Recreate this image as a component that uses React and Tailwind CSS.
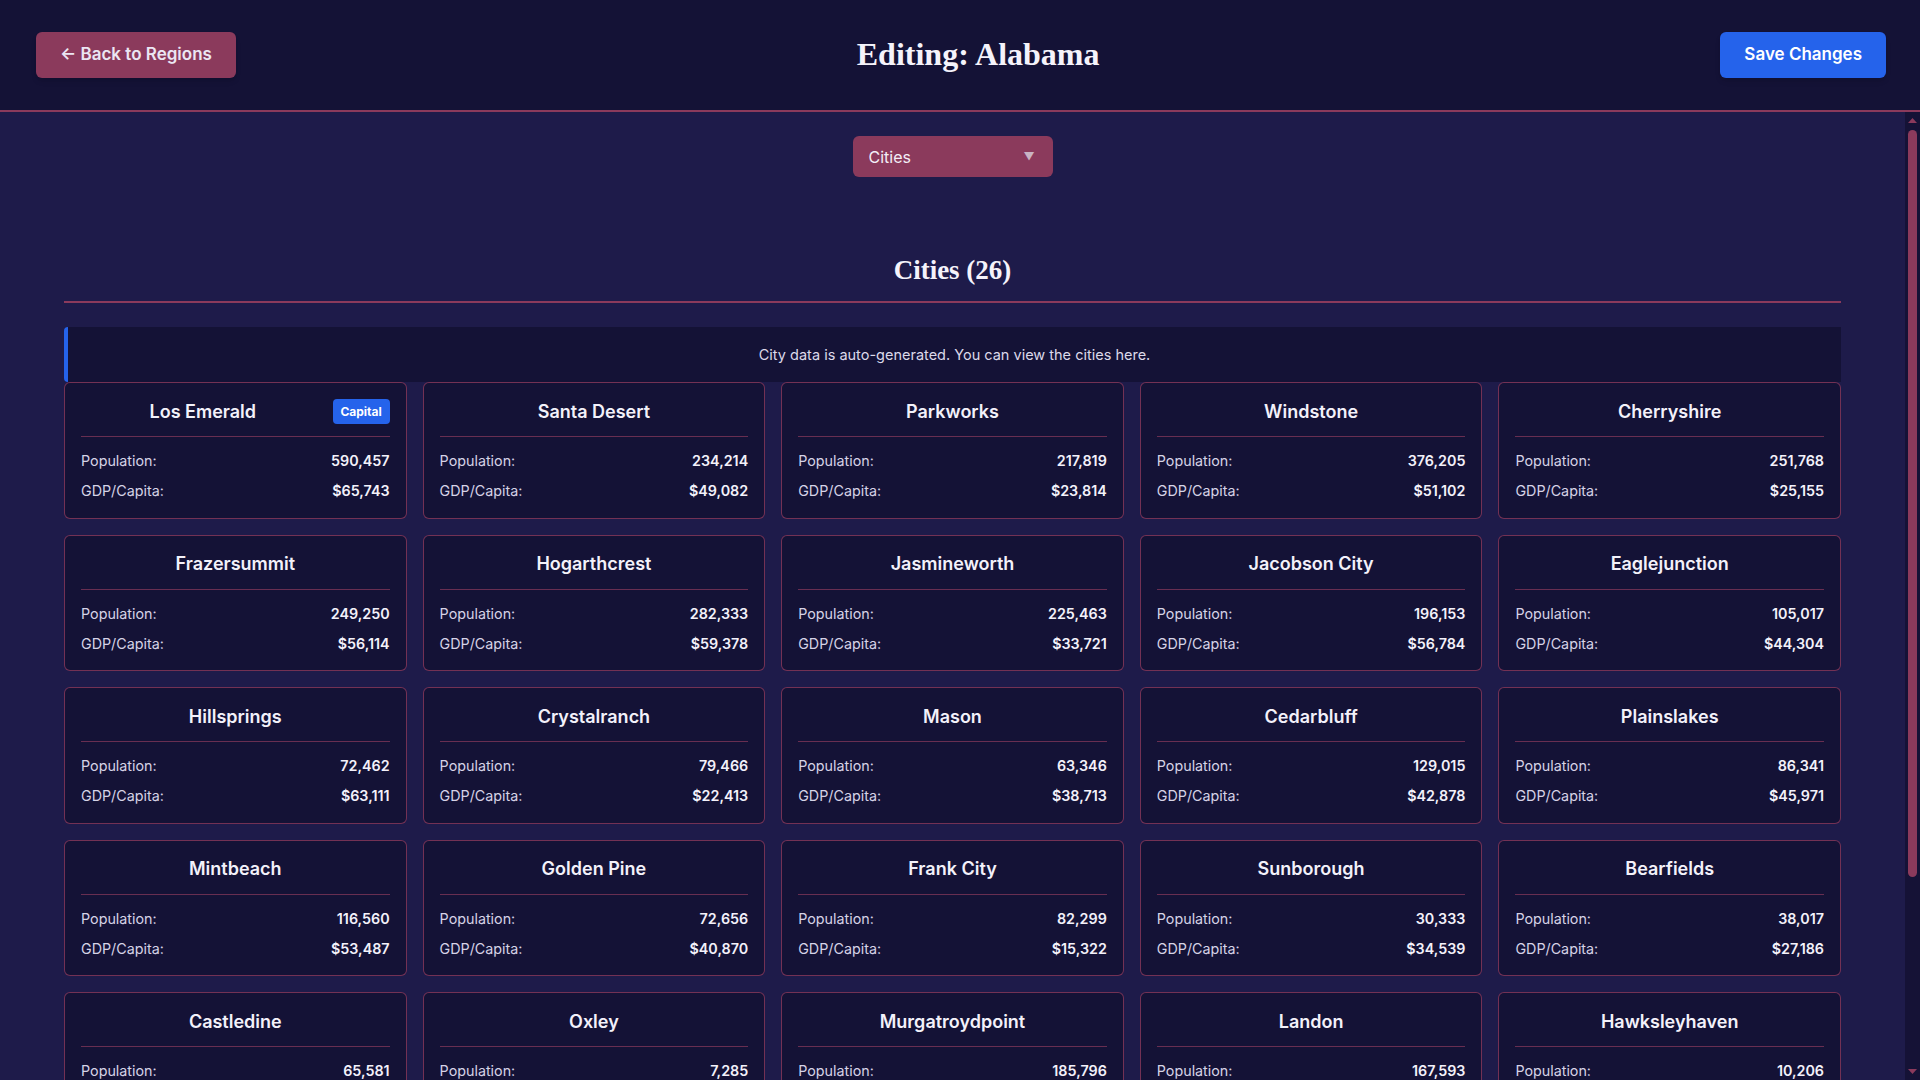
import React from "react";

const cities = [
  ["Los Emerald", "590,457", "$65,743", true],
  ["Santa Desert", "234,214", "$49,082"],
  ["Parkworks", "217,819", "$23,814"],
  ["Windstone", "376,205", "$51,102"],
  ["Cherryshire", "251,768", "$25,155"],
  ["Frazersummit", "249,250", "$56,114"],
  ["Hogarthcrest", "282,333", "$59,378"],
  ["Jasmineworth", "225,463", "$33,721"],
  ["Jacobson City", "196,153", "$56,784"],
  ["Eaglejunction", "105,017", "$44,304"],
  ["Hillsprings", "72,462", "$63,111"],
  ["Crystalranch", "79,466", "$22,413"],
  ["Mason", "63,346", "$38,713"],
  ["Cedarbluff", "129,015", "$42,878"],
  ["Plainslakes", "86,341", "$45,971"],
  ["Mintbeach", "116,560", "$53,487"],
  ["Golden Pine", "72,656", "$40,870"],
  ["Frank City", "82,299", "$15,322"],
  ["Sunborough", "30,333", "$34,539"],
  ["Bearfields", "38,017", "$27,186"],
  ["Castledine", "65,581", "$31,204"],
  ["Oxley", "7,285", "$18,650"],
  ["Murgatroydpoint", "185,796", "$47,392"],
  ["Landon", "167,593", "$52,018"],
  ["Hawksleyhaven", "10,206", "$29,447"],
  ["Riverton Falls", "54,118", "$36,902"],
];

function CityCard({ name, pop, gdp, capital }) {
  return (
    <div className="rounded-md border border-[#8b3a5c]/80 bg-[#141236] px-4 pt-4 pb-[16.5px]">
      <div className="box-content flex h-[25px] items-center gap-2 border-b border-[#8b3a5c]/70 pb-3">
        <h3 className="flex-1 text-center text-[18px] font-semibold leading-none text-[#f3f1fa]">{name}</h3>
        {capital && (
          <span className="flex h-[25px] w-[57px] items-center justify-center rounded bg-[#2563eb] text-[12px] font-bold text-white">
            Capital
          </span>
        )}
      </div>
      <div className="mt-[14px] flex flex-col gap-[10px] text-[14.3px] leading-5">
        <div className="flex justify-between">
          <span className="text-[#d6d3e6]">Population:</span>
          <span className="font-semibold text-[#f3f1fa]">{pop}</span>
        </div>
        <div className="flex justify-between">
          <span className="text-[#d6d3e6]">GDP/Capita:</span>
          <span className="font-semibold text-[#f3f1fa]">{gdp}</span>
        </div>
      </div>
    </div>
  );
}

function Scrollbar() {
  return (
    <div className="flex w-[15px] shrink-0 flex-col items-center bg-[#151236]">
      <svg width="15" height="15" viewBox="0 0 15 15" className="shrink-0">
        <path d="M3 11 L12 11 L7.5 6 Z" fill="#8b3a5c" />
      </svg>
      <div className="mt-[3px] h-[747px] w-[9px] rounded-full bg-[#8b3a5c]" />
      <div className="flex-1" />
      <svg width="15" height="15" viewBox="0 0 15 15" className="shrink-0">
        <path d="M3 4 L12 4 L7.5 9 Z" fill="#8b3a5c" />
      </svg>
    </div>
  );
}

export default function App() {
  return (
    <div className="flex h-screen flex-col bg-[#1e1b4a] font-['Inter','Noto_Sans',sans-serif] text-[#ece9f5]">
      <header className="flex h-[112px] shrink-0 items-center justify-between border-b-2 border-[#8b3a5c] bg-[#141236] pl-9 pr-[34px]">
        <button className="h-[46px] rounded-md bg-[#8b3a5c] px-6 text-[17px] font-semibold text-[#ebe6f3] shadow-md">
          ← Back to Regions
        </button>
        <h1 className="mb-[2px] font-['Liberation_Serif',serif] text-[32px] font-bold leading-10 text-[#f5f3fb]">Editing: Alabama</h1>
        <button className="h-[46px] rounded-md bg-[#2563eb] px-6 text-[17px] font-semibold text-white shadow-md">
          Save Changes
        </button>
      </header>
      <div className="flex min-h-0 flex-1">
        <main className="min-w-0 flex-1 overflow-y-auto px-16 pt-6 [scrollbar-width:none]">
          <div className="flex justify-center">
            <div className="flex h-[41px] w-[200px] items-center justify-between rounded-md bg-[#8b3a5c] pl-[16px] pr-[18px] text-[16px] text-[#f3eef7]">
              <span>Cities</span>
              <span className="text-[11px] text-[#c9b3c3]">▼</span>
            </div>
          </div>
          <h2 className="mt-[77px] border-b-2 border-[#8b3a5c] pb-[15px] text-center font-['Liberation_Serif',serif] text-[27px] font-bold leading-8 text-[#f5f3fb]">
            Cities (26)
          </h2>
          <div className="mt-6 flex h-[55px] items-center justify-center rounded-l border-l-4 border-[#2563eb] bg-[#141236] text-[14.5px] text-[#dcd9ea]">
            City data is auto-generated. You can view the cities here.
          </div>
          <div className="grid grid-cols-5 gap-4 pb-12">
            {cities.map((c) => (
              <CityCard key={c[0]} name={c[0]} pop={c[1]} gdp={c[2]} capital={c[3]} />
            ))}
          </div>
        </main>
        <Scrollbar />
      </div>
    </div>
  );
}
